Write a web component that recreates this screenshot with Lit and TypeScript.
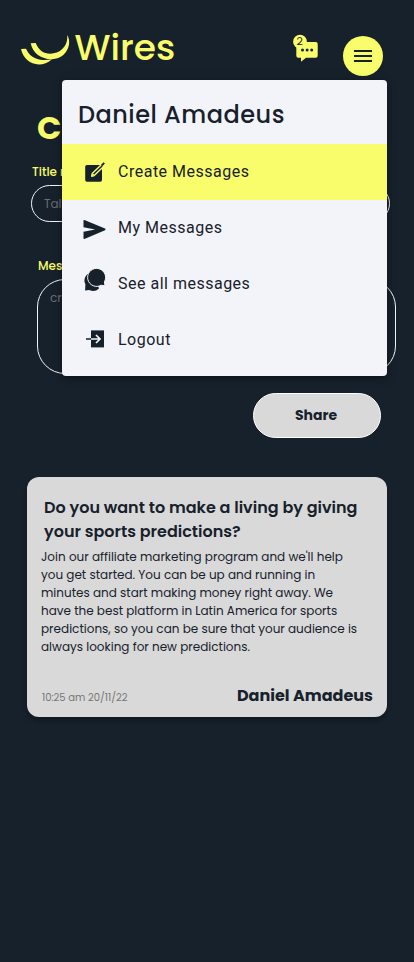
import { LitElement, html, css } from "lit";
import { customElement } from "lit/decorators.js";

const menuItems = [
  {
    label: "Create Messages",
    active: true,
    icon: html`<svg viewBox="0 0 24 24" width="24" height="24">
      <rect x="3.2" y="5" width="16.8" height="16.7" rx="1.8" fill="#17212b" />
      <path d="M9.7 16.2l.5-2.6L19.6 4.6l2 2-9.4 9z" fill="#17212b" stroke="#f9fd6c" stroke-width="1.4" stroke-linejoin="round" />
      <path d="M19.6 5.6l2.6-2.8" stroke="#17212b" stroke-width="1.9" />
      <path d="M10 15.8l1.8-1.7" stroke="#f9fd6c" stroke-width="1.2" />
    </svg>`,
  },
  {
    label: "My Messages",
    active: false,
    icon: html`<svg viewBox="0 0 24 24" width="24" height="24">
      <path d="M1.5 4.2l.9-.2L23 12.6c.7.3.7 1.300 0 1.600L2.400 23l-.9-.3v-7l11.700-2.200-11.700-2.200z" fill="#17212b" />
    </svg>`,
  },
  {
    label: "See all messages",
    active: false,
    icon: html`<svg viewBox="0 4 24 24" width="24" height="24">
      <path d="M11 4.500a8 8 0 0 0-7.600 11.800L3.100 22.400l4.200-.5A8.600 8.600 0 0 0 17 20.400z" fill="#17212b" />
      <path d="M14.700.4a9 9 0 1 0 4.400 16.800l3.900.6-.6-3.900A9 9 0 0 0 14.700.4z" fill="#17212b" stroke="#f3f4f9" stroke-width="1" />
    </svg>`,
  },
  {
    label: "Logout",
    active: false,
    icon: html`<svg viewBox="0 0 24 24" width="24" height="24">
      <rect x="9" y="2.4" width="13" height="17" fill="#17212b" />
      <path d="M4 11h5" stroke="#17212b" stroke-width="1.7" />
      <path d="M9 11h8.5M14 7l4 4-4 4" fill="none" stroke="#f3f4f9" stroke-width="1.7" />
    </svg>`,
  },
];

@customElement("app-menu")
class AppMenu extends LitElement {
  static styles = css`
    :host { display: block; background: #f3f4f9; border-radius: 4px; overflow: hidden; box-shadow: 0 3px 5px rgba(0, 0, 0, 0.3), 0 1px 12px rgba(0, 0, 0, 0.16); color: #17212b; }
    .name { box-sizing: border-box; height: 64px; padding: 17px 16px 0; font: 500 24px/36px Poppins, sans-serif; letter-spacing: 0.5px; }
    .item { display: flex; align-items: center; height: 56px; padding-left: 20px; gap: 12px; font: 400 16px/24px Roboto, sans-serif; letter-spacing: 0.5px; }
    .active { background: #f9fd6c; }
    .item svg { display: block; overflow: visible; }
  `;
  render() {
    return html`<div class="name">Daniel Amadeus</div>
      ${menuItems.map((i) => html`<div class="item ${i.active ? "active" : ""}">${i.icon}<span>${i.label}</span></div>`)}`;
  }
}

@customElement("app-post")
class AppPost extends LitElement {
  static styles = css`
    :host { box-sizing: border-box; display: flex; flex-direction: column; height: 240px; padding: 19px 14px 9px; border-radius: 12px; background: #d9d9d9; color: #17212b; font-family: Poppins, sans-serif; box-shadow: 0 4px 4px rgba(0, 0, 0, 0.25); }
    .title { margin: 0 0 4px 3px; font-size: 16px; line-height: 24px; font-weight: 600; }
    .body { font-size: 12px; line-height: 18px; white-space: nowrap; }
    .foot { display: flex; justify-content: space-between; align-items: baseline; margin-top: auto; }
    .time { margin-left: 1px; font-size: 10px; line-height: 15px; color: #777; }
    .author { font-size: 16px; line-height: 24px; font-weight: 700; }
  `;
  render() {
    return html`<div class="title">Do you want to make a living by giving<br />your sports predictions?</div>
      <div class="body">
        Join our affiliate marketing program and we'll help<br />you get started. You can be up and running in<br />minutes
        and start making money right away. We<br />have the best platform in Latin America for sports<br />predictions,
        so you can be sure that your audience is<br />always looking for new predictions.
      </div>
      <div class="foot"><span class="time">10:25 am 20/11/22</span><span class="author">Daniel Amadeus</span></div>`;
  }
}

@customElement("app-root")
class AppRoot extends LitElement {
  static styles = css`
    :host { position: relative; display: block; box-sizing: border-box; width: 100%; height: 962px; overflow: hidden; background: #17212b; font-family: Poppins, sans-serif; }
    svg { display: block; overflow: visible; }
    header { display: flex; height: 104px; box-sizing: border-box; padding: 21px 31px 0 21px; align-items: flex-start; }
    .logo { margin-top: 13px; }
    .brand { margin-left: 5.5px; font-size: 36px; line-height: 54px; font-weight: 500; color: #f9fd6c; }
    .bubble { margin: 13px 24px 0 auto; }
    .bubble text { font: 400 11px Poppins, sans-serif; }
    .burger { margin-top: 15px; display: grid; place-items: center; width: 40px; height: 40px; padding: 0; border: 0; border-radius: 50%; background: #f9fd6c; }
    h1 { margin: 0 0 11px 37px; font-size: 32px; line-height: 48px; font-weight: 700; color: #f9fd6c; }
    label { display: block; font-size: 12px; line-height: 18px; font-weight: 500; color: #f9fd6c; }
    .first { margin: 0 24px 35px 31px; }
    .second { margin: 0 18px 19px 37px; }
    .first label, .second label { margin-left: 1px; }
    .field { box-sizing: border-box; border: 1px solid #f3f4f9; font-size: 12px; line-height: 18px; color: #6b6d70; }
    .input { margin-top: 4px; height: 37px; padding: 9px 12px; border-radius: 19px; }
    .area { margin-top: 4px; height: 95px; padding: 9px 12px; border-radius: 28px; }
    .share { display: block; box-sizing: border-box; width: 128px; height: 45px; margin: 0 33px 39px auto; padding: 0 2px 0 0; border: 1px solid #fff; border-radius: 23px; background: #d9d9d9; color: #17212b; font: 700 14px/21px Poppins, sans-serif; }
    app-post { margin: 0 27px; }
    app-menu { position: absolute; left: 62px; top: 80px; width: 325px; height: 296px; }
  `;
  render() {
    return html`
      <header>
        <svg class="logo" width="48" height="31" viewBox="21 34 48 31" fill="#f9fd6c">
          <path d="M21 49.100l5-.4c2.800 6.500 9 11.100 17.100 11.300 3.200.1 6-.2 8.900-.8-4.600 4-8.800 5.400-13.300 5.300C30.300 64.200 23.200 58.800 21 49.100z" />
          <path d="M30.700 43.300l5-.3c2.500 6.700 8 10.900 14.700 10.800 9-.2 16.300-6.200 16.900-15.700l-.2-3.200c2 3 2.400 6.500 1.900 9.700-1.300 8.500-8.300 14.400-17 14.600-10.600.2-19.200-5.800-21.300-15.900z" />
        </svg>
        <span class="brand">Wires</span>
        <svg class="bubble" width="26" height="28" viewBox="293 34 26 28">
          <path d="M298.300 42h17.400a2 2 0 0 1 2 2v11.700a2 2 0 0 1-2 2h-9.700l-5 4v-4h-2.700a2 2 0 0 1-2-2V44a2 2 0 0 1 2-2z" fill="#f9fd6c" />
          <circle cx="300" cy="41.700" r="6.900" fill="#f9fd6c" />
          <g fill="#17212b">
            <circle cx="302.500" cy="50" r="1.500" /><circle cx="307.100" cy="50" r="1.500" /><circle cx="311.700" cy="50" r="1.500" />
            <text x="299.700" y="45.300" text-anchor="middle">2</text>
          </g>
        </svg>
        <button class="burger" aria-label="Menu">
          <svg width="18" height="12" viewBox="0 0 18 12" fill="#17212b"><path d="M0 0h18v2H0zM0 5h18v2H0zM0 10h18v2H0z" /></svg>
        </button>
      </header>
      <h1>C</h1>
      <div class="first"><label>Title m</label><div class="field input">Talk</div></div>
      <div class="second"><label>Mess</label><div class="field area">cre</div></div>
      <button class="share">Share</button>
      <app-post></app-post>
      <app-menu></app-menu>
    `;
  }
}
